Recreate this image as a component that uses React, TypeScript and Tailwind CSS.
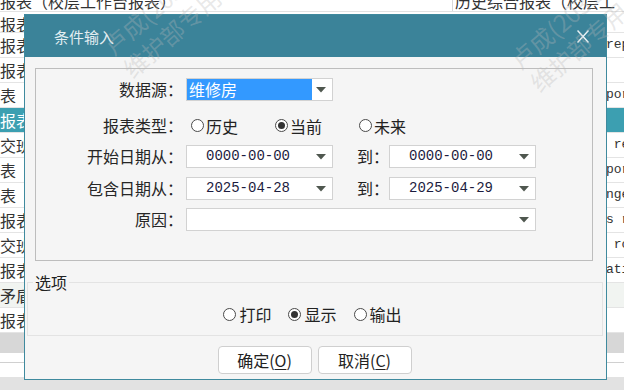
import React from "react";

// background table rows (left edge / right edge peek out from behind the dialog)
const leftCells = ["报表", "报表", "报表", "表（", "报表", "交班", "表（", "表（", "报表", "交班", "报表", "矛盾", "报表"];
const rightCells = ["", "report", "", "port", "", " report", "port", "nge", "s rep", " rop", "ation", "", ""];

export default function App() {
  return (
    <div className="relative w-[624px] h-[390px] overflow-hidden bg-white font-['Noto_Sans_CJK_SC',sans-serif] text-[#222]">
      <BackgroundTable />
      <Dialog />
      <Watermark className="left-[97px] top-[38px]" />
      <Watermark className="left-[504px] top-[52px]" />
    </div>
  );
}

// ── Background ──────────────────────────────────────────────────────

function BackgroundTable() {
  return (
    <div className="flex flex-col h-full">
      <div className="h-[12px] flex border-b border-[#e2e2e2] overflow-hidden">
        <div className="w-[200px] overflow-hidden whitespace-nowrap text-[16px] leading-[16px] -mt-[7px] text-[#333]">
          报表（校层工作台报表）
        </div>
        <div className="w-[252px]" />
        <div className="flex-1 border-l border-[#d8d8d8] pl-[2px] overflow-hidden whitespace-nowrap text-[16px] leading-[16px] -mt-[7px] text-[#333]">
          历史综合报表（校层工
        </div>
      </div>
      {leftCells.map((txt, i) => (
        <div
          key={i}
          className={`flex border-b border-[#e4e4e4] ${i === 0 ? "h-[21px]" : "h-[25px]"} ${
            i === 4 ? "bg-[#3c9fb1] text-white" : i === 11 ? "bg-[#f1f4f1] text-[#333]" : "bg-white text-[#333]"
          }`}
        >
          <div className="w-[24px] overflow-hidden whitespace-nowrap text-[16px] leading-[24px]">{txt}</div>
          <div className="flex-1" />
          <div className="w-[18px] overflow-hidden whitespace-pre font-['Liberation_Mono',monospace] text-[13px] leading-[24px]">
            {rightCells[i]}
          </div>
        </div>
      ))}
      <div className="h-[20px] bg-[#d7d7d7]" />
      <div className="h-[10px] bg-white border-b border-[#d0d0d0]" />
      <div className="h-[14px] bg-white" />
      <div className="flex-1 bg-[#e2e2e2]" />
    </div>
  );
}

function Watermark({ className }: { className: string }) {
  return (
    <div
      className={`absolute pointer-events-none origin-top-left -rotate-[41deg] whitespace-nowrap text-[24px] leading-[30px] text-[rgba(185,185,185,0.32)] ${className}`}
    >
      <div>卢成(20312)</div>
      <div>维护部专用</div>
    </div>
  );
}

// ── Dialog ──────────────────────────────────────────────────────────

function Dialog() {
  return (
    <div className="absolute left-[24px] top-[14px] w-[583px] h-[366px] border border-[#3f8a9e] bg-[#f5f5f5] flex flex-col">
      <div className="h-[42px] shrink-0 bg-[#3b8399] flex items-center justify-between pl-[29px] pr-[17px]">
        <span className="text-[15px] leading-none text-[#e2eef1]">条件输入</span>
        <svg width="12" height="13" viewBox="0 0 12 13">
          <path d="M0.5 0.5 L11.5 12.5 M11.5 0.5 L0.5 12.5" stroke="#e8f1f4" strokeWidth="1.5" fill="none" />
        </svg>
      </div>

      {/* condition group */}
      <div className="ml-[10px] mr-[13px] mt-[11px] h-[193px] border border-[#bdbdbd] pt-[9px]">
        <Row label="数据源：">
          <Select width="w-[147px]" highlight value="维修房" />
        </Row>
        <Row label="报表类型：" className="mt-[13px]">
          <div className="ml-[5px] flex items-center gap-[37px]">
            <Radio label="历史" />
            <Radio label="当前" checked />
            <Radio label="未来" />
          </div>
        </Row>
        <Row label="开始日期从：" className="mt-[8px]">
          <Select width="w-[147px]" value="0000-00-00" mono />
          <span className="ml-[24px] w-[32px] text-[16px] leading-[23px]">到：</span>
          <Select width="w-[147px]" value="0000-00-00" mono />
        </Row>
        <Row label="包含日期从：" className="mt-[9px]">
          <Select width="w-[147px]" value="2025-04-28" mono />
          <span className="ml-[24px] w-[32px] text-[16px] leading-[23px]">到：</span>
          <Select width="w-[147px]" value="2025-04-29" mono />
        </Row>
        <Row label="原因：" className="mt-[8px]">
          <Select width="w-[350px]" value="" />
        </Row>
      </div>

      {/* options */}
      <div className="relative ml-[2px] mr-[3px] mt-[21px] h-[54px] border border-[#e3e3e3] flex items-center justify-center gap-[17px] pt-[10px] pr-[5px]">
        <span className="absolute left-[5px] -top-[9px] px-[2px] bg-[#f5f5f5] text-[16px] leading-[16px]">选项</span>
        <Radio label="打印" gap="gap-[3px]" />
        <Radio label="显示" checked gap="gap-[3px]" />
        <Radio label="输出" gap="gap-[3px]" />
      </div>

      <div className="mt-[10px] flex justify-center gap-[6px] pr-[2px]">
        <Btn label="确定" hot="O" />
        <Btn label="取消" hot="C" />
      </div>
    </div>
  );
}

function Row({ label, className = "", children }: { label: string; className?: string; children: React.ReactNode }) {
  return (
    <div className={`flex items-center h-[23px] ${className}`}>
      <span className="w-[147px] shrink-0 text-right text-[16px] leading-[23px] text-[#262626]">{label}</span>
      <div className="ml-[3px] flex items-center">{children}</div>
    </div>
  );
}

function Select({ width, value, highlight = false, mono = false }: { width: string; value: string; highlight?: boolean; mono?: boolean }) {
  return (
    <div className={`${width} h-[23px] border border-[#d2d2d2] bg-white flex items-stretch`}>
      {highlight ? (
        <span className="flex-1 bg-[#3399ff] text-white text-[16px] leading-[21px] pl-[2px]">{value}</span>
      ) : (
        <span
          className={`flex-1 pl-[19px] ${
            mono ? "font-['Liberation_Mono',monospace] text-[14px] leading-[21px] text-[#1c1c3e]" : "text-[16px] leading-[21px]"
          }`}
        >
          {value}
        </span>
      )}
      <span className="w-[20px] flex items-center justify-start pl-[4px]">
        <svg width="10" height="6" viewBox="0 0 10 6">
          <path d="M0 0 H10 L5 5.5 Z" fill="#4f574f" />
        </svg>
      </span>
    </div>
  );
}

function Radio({ label, checked = false, gap = "gap-[2px]" }: { label: string; checked?: boolean; gap?: string }) {
  return (
    <span className={`flex items-center ${gap}`}>
      <span className="w-[13px] h-[13px] rounded-full border border-[#4a4a4a] bg-white flex items-center justify-center">
        {checked && <span className="w-[7px] h-[7px] rounded-full bg-[#333]" />}
      </span>
      <span className="text-[16px] leading-[20px] text-[#222]">{label}</span>
    </span>
  );
}

function Btn({ label, hot }: { label: string; hot: string }) {
  return (
    <div className="w-[94px] h-[28px] border border-[#cfcfcf] rounded-[4px] bg-white flex items-center justify-center text-[16px] leading-[20px] text-[#222]">
      {label}(<span className="underline underline-offset-2">{hot}</span>)
    </div>
  );
}
